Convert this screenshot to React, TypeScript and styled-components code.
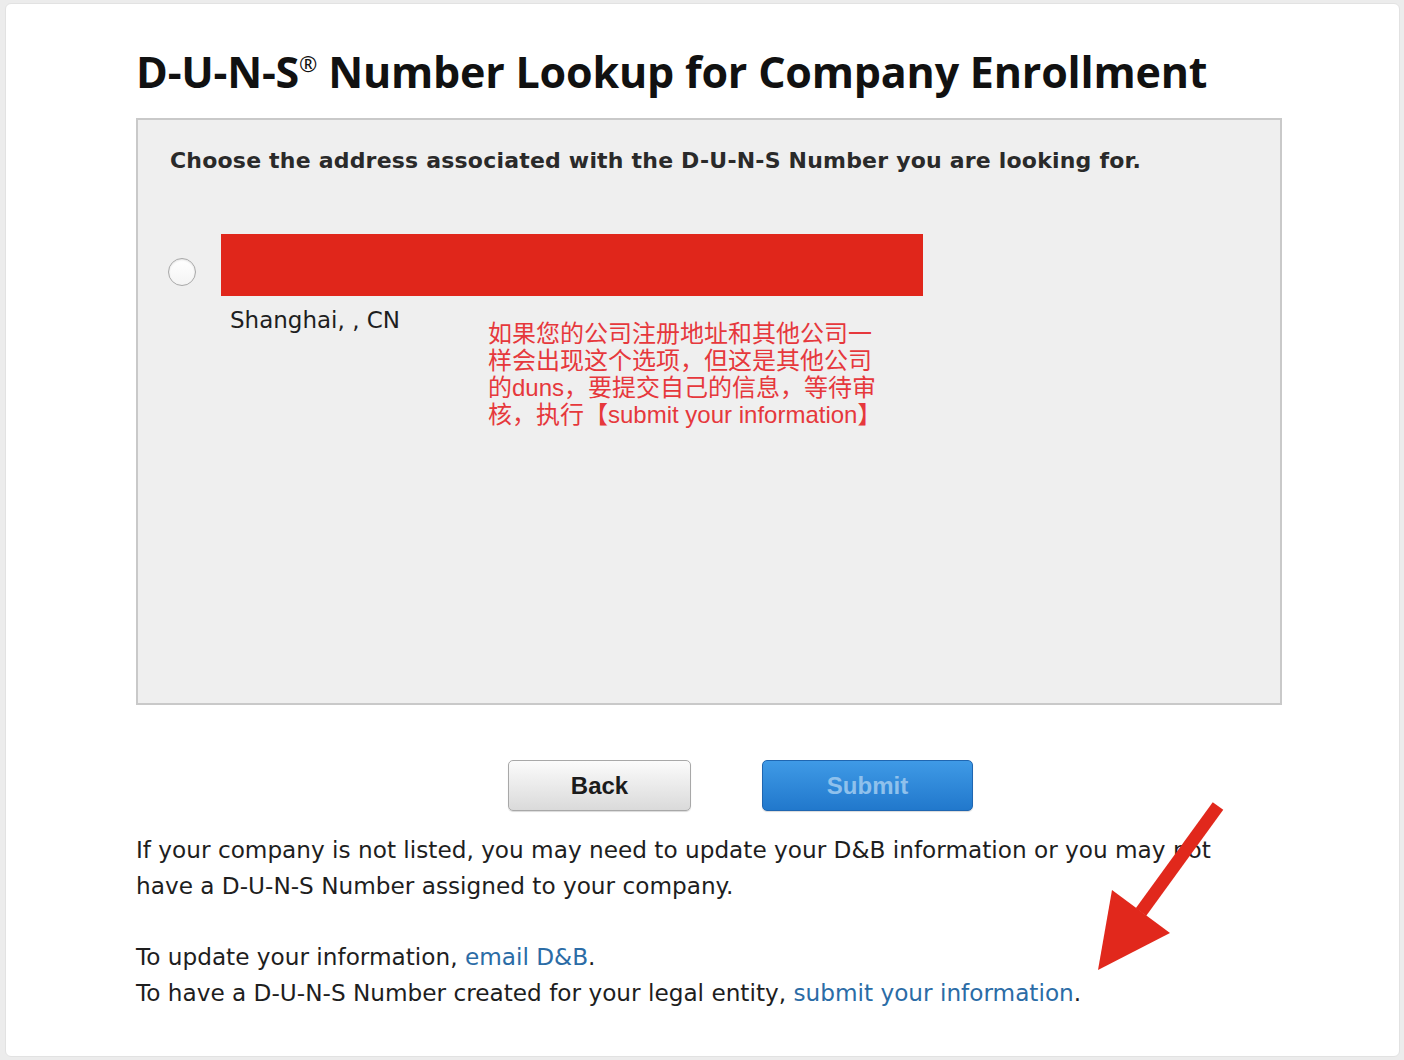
import React from "react";
import styled, { createGlobalStyle } from "styled-components";

const GlobalStyle = createGlobalStyle`
  html, body {
    margin: 0;
    padding: 0;
    background: #ececec;
  }
  body {
    font-family: "DejaVu Sans", "Liberation Sans", sans-serif;
  }
`;

const Page = styled.div`
  width: 1404px;
  height: 1060px;
  padding: 3px 4px 3px 5px;
  box-sizing: border-box;
`;

const Panel = styled.div`
  position: relative;
  height: 100%;
  background: #ffffff;
  border: 1px solid #e2e2e2;
  border-radius: 6px;
  box-sizing: border-box;
  padding: 0 0 0 130px;
`;

const Title = styled.h1`
  margin: 43px 0 0;
  font-family: "Open Sans", "Liberation Sans", sans-serif;
  font-weight: 700;
  font-size: 43px;
  line-height: 50px;
  letter-spacing: -0.2px;
  color: #111;
  white-space: nowrap;
  sup {
    font-size: 22px;
    vertical-align: 16px;
    line-height: 0;
    font-weight: 400;
  }
`;

const Box = styled.div`
  position: relative;
  margin-top: 21px;
  width: 1146px;
  height: 587px;
  box-sizing: border-box;
  background: #efefef;
  border: 2px solid #c9c9c9;
  padding: 26px 0 0 32px;
`;

const Heading = styled.h2`
  margin: 0;
  font-family: "DejaVu Sans", sans-serif;
  font-weight: 700;
  font-size: 22px;
  line-height: 30px;
  letter-spacing: 0.2px;
  color: #2a2a2a;
  white-space: nowrap;
`;

const OptionRow = styled.div`
  display: flex;
  align-items: flex-start;
  gap: 25px;
  margin-top: 58px;
  margin-left: -2px;
`;

const Radio = styled.span`
  flex: none;
  margin-top: 24px;
  width: 26px;
  height: 26px;
  border-radius: 50%;
  border: 1px solid #a9a9a9;
  background: linear-gradient(#ffffff, #f4f4f4);
  box-shadow: inset 0 1px 2px rgba(0, 0, 0, 0.12);
`;

const Address = styled.div`
  display: flex;
  flex-direction: column;
`;

const Redacted = styled.div`
  width: 702px;
  height: 62px;
  background: #e0261b;
`;

const City = styled.div`
  margin: 9px 0 0 9px;
  font-size: 23px;
  line-height: 30px;
  color: #1e1e1e;
`;

const Note = styled.div`
  position: absolute;
  left: 350px;
  top: 200px;
  font-family: "Liberation Sans", "Noto Sans CJK SC", sans-serif;
  font-size: 24px;
  line-height: 27px;
  color: #e6383c;
  white-space: nowrap;
`;

const Actions = styled.div`
  display: flex;
  gap: 71px;
  margin-top: 55px;
  padding-left: 372px;
`;

const Button = styled.button<{ $primary?: boolean }>`
  height: 51px;
  width: ${(p) => (p.$primary ? "211px" : "183px")};
  border-radius: 5px;
  font-family: "Liberation Sans", Arial, sans-serif;
  font-weight: 700;
  font-size: 24px;
  cursor: pointer;
  border: 1px solid ${(p) => (p.$primary ? "#1f66b1" : "#a8a8a8")};
  color: ${(p) => (p.$primary ? "#8fc1ec" : "#1b1b1b")};
  background: ${(p) =>
    p.$primary
      ? "linear-gradient(#3f9ae6, #2178cc)"
      : "linear-gradient(#fbfbfb, #dadada)"};
  box-shadow: 0 1px 1px rgba(0, 0, 0, 0.15);
`;

const Text = styled.p<{ $top: number }>`
  margin: ${(p) => p.$top}px 0 0;
  font-size: 23.2px;
  line-height: 36px;
  color: #1e1e1e;
  width: 1100px;
`;

const Link = styled.a`
  color: #2b6ca6;
  text-decoration: none;
`;

const Arrow = styled.svg`
  position: absolute;
  left: 1080px;
  top: 792px;
  width: 150px;
  height: 185px;
`;

export default function App() {
  return (
    <>
      <GlobalStyle />
      <Page>
        <Panel>
          <Title>
            D-U-N-S<sup>®</sup> Number Lookup for Company Enrollment
          </Title>
          <Box>
            <Heading>
              Choose the address associated with the D-U-N-S Number you are
              looking for.
            </Heading>
            <OptionRow>
              <Radio />
              <Address>
                <Redacted />
                <City>Shanghai, , CN</City>
              </Address>
            </OptionRow>
            <Note>
              如果您的公司注册地址和其他公司一
              <br />
              样会出现这个选项，但这是其他公司
              <br />
              的duns，要提交自己的信息，等待审
              <br />
              核，执行【submit your information】
            </Note>
          </Box>
          <Actions>
            <Button>Back</Button>
            <Button $primary>Submit</Button>
          </Actions>
          <Text $top={21}>
            If your company is not listed, you may need to update your D&amp;B
            information or you may not have a D-U-N-S Number assigned to your
            company.
          </Text>
          <Text $top={35}>
            To update your information, <Link href="#">email D&amp;B</Link>.
            <br />
            To have a D-U-N-S Number created for your legal entity,{" "}
            <Link href="#">submit your information</Link>.
          </Text>
          <Arrow viewBox="0 0 150 185">
            <line
              x1="132"
              y1="10"
              x2="55"
              y2="116"
              stroke="#e1281c"
              strokeWidth="13"
            />
            <polygon points="26,94 84,137 12,174" fill="#e1281c" />
          </Arrow>
        </Panel>
      </Page>
    </>
  );
}
